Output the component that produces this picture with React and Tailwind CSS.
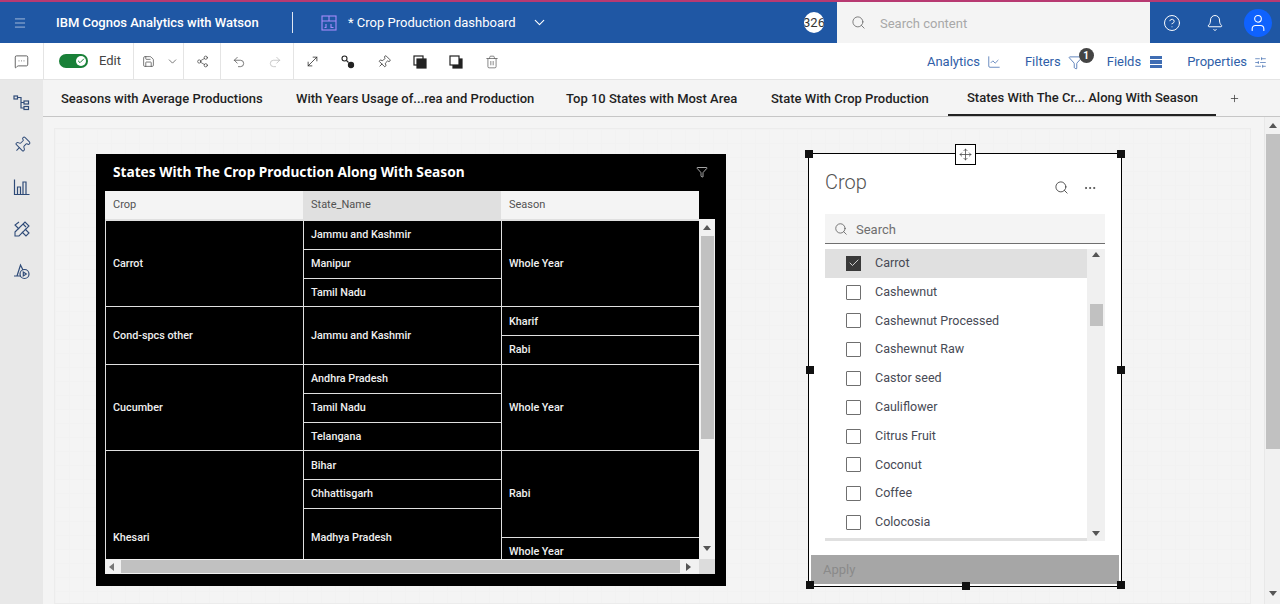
import {
  Menu, Search, CircleHelp, Bell, User, ChevronDown, Share2, Undo2, Redo2, Save, Trash2, Pin,
  Filter, MessageSquareMore, MoveDiagonal, ChartLine, SlidersHorizontal, Plus, Check, Move, Ellipsis,
} from "lucide-react";

const font = { fontFamily: '"Roboto", "Noto Sans", sans-serif' };

const tabs = [
  { label: "Seasons with Average Productions", w: "w-[234px] pl-[18px]" },
  { label: "With Years Usage of...rea and Production", w: "w-[270px] pl-[19px]" },
  { label: "Top 10 States with Most Area", w: "w-[205px] pl-[19px]" },
  { label: "State With Crop Production", w: "w-[196px] pl-[19px]" },
  { label: "States With The Cr... Along With Season", w: "w-[268px] pl-[19px]", active: true },
];

const crops = ["Carrot", "Cashewnut", "Cashewnut Processed", "Cashewnut Raw", "Castor seed", "Cauliflower", "Citrus Fruit", "Coconut", "Coffee", "Colocosia"];

function BoardIcon() {
  return (
    <svg width="18" height="18" viewBox="0 0 18 18" fill="none" stroke="#a78bfa" strokeWidth="1.1">
      <rect x="2" y="2" width="14" height="14" />
      <path d="M2 7h14M9 2v5M6 10v3.5H4.5M11 10v3.5h2.5" />
    </svg>
  );
}

function HierarchyIcon() {
  return (
    <svg width="18" height="18" viewBox="0 0 18 18" fill="none" stroke="#2f4b78" strokeWidth="1.2">
      <rect x="1" y="2" width="3.5" height="3" />
      <rect x="11" y="7" width="4.5" height="3" />
      <rect x="11" y="12.5" width="4.5" height="3" />
      <path d="M4.5 3.5H8V14h3M8 8.5h3" />
    </svg>
  );
}

function BarsIcon() {
  return (
    <svg width="18" height="18" viewBox="0 0 18 18" fill="none" stroke="#2f4b78" strokeWidth="1.2">
      <path d="M1.5 1.5v15h15M4.5 16.5V9h3v7.5M10 16.5V4h3v12.5" />
    </svg>
  );
}

function ToolsIcon() {
  return (
    <svg width="18" height="18" viewBox="0 0 18 18" fill="none" stroke="#2f4b78" strokeWidth="1.1">
      <path d="M2 12 12 2l4 4L6 16H2z" />
      <path d="M6 2 2 5l4 4M12 9l4 4-3 3-4-4" />
      <path d="m10 4 3 3" />
    </svg>
  );
}

function ShapesPlayIcon() {
  return (
    <svg width="18" height="18" viewBox="0 0 18 18" fill="none" stroke="#2f4b78" strokeWidth="1.2">
      <path d="M1 14h7M4 14l3.5-11L10 8" />
      <circle cx="11.5" cy="12" r="4.5" />
      <path d="m10.3 10 3 2-3 2z" />
    </svg>
  );
}

function StackIcon({ front }) {
  // front = the dark square lies on top
  return (
    <svg width="14" height="14" viewBox="0 0 14 14" fill="none" stroke="#222" strokeWidth="1.2">
      {front ? (
        <>
          <rect x="1" y="1" width="9" height="9" fill="#fff" />
          <rect x="4" y="4" width="9" height="9" fill="#222" />
        </>
      ) : (
        <>
          <rect x="4" y="4" width="9" height="9" fill="#222" />
          <rect x="1" y="1" width="9" height="9" fill="#fff" />
        </>
      )}
    </svg>
  );
}

function ConnectIcon() {
  return (
    <svg width="14" height="14" viewBox="0 0 14 14" fill="none" stroke="#222" strokeWidth="1.1">
      <circle cx="3.5" cy="3.5" r="2.5" />
      <path d="m5.5 5.5 2 2" />
      <circle cx="10" cy="10" r="2.6" fill="#222" />
    </svg>
  );
}

function FieldsIcon() {
  return (
    <svg width="14" height="14" viewBox="0 0 14 14" fill="#3f6db3">
      <rect x="1" y="1" width="12" height="3" />
      <rect x="1" y="5" width="12" height="4" />
      <rect x="1" y="10" width="12" height="3" />
    </svg>
  );
}

function Tool({ children }) {
  return <div className="w-[36px] pt-[1px] flex justify-center">{children}</div>;
}

function Sep() {
  return <div className="w-px h-full bg-[#e4e4e4]" />;
}

function Handle({ className }) {
  return <div className={`absolute w-[8px] h-[8px] bg-[#111] ${className}`} />;
}

function Cell({ children, rowSpan }) {
  return (
    <td rowSpan={rowSpan} className="border border-[#e0e0e0] pl-[7px] pr-[6px] pt-[1px] text-[10.8px] font-medium text-[#f0f0f0] align-middle">
      {children}
    </td>
  );
}

function Row({ children }) {
  return <tr className="h-[28.8px]">{children}</tr>;
}

function Arrow({ dir, className = "" }) {
  const shape = {
    up: "border-x-[4px] border-x-transparent border-b-[5px] border-b-[#555]",
    down: "border-x-[4px] border-x-transparent border-t-[5px] border-t-[#555]",
    left: "border-y-[4px] border-y-transparent border-r-[5px] border-r-[#777]",
    right: "border-y-[4px] border-y-transparent border-l-[5px] border-l-[#555]",
  }[dir];
  return <div className={`w-0 h-0 ${shape} ${className}`} />;
}

function DataTable() {
  return (
    <div className="mt-[1px] ml-[9px] w-[610px] h-[383px] flex flex-wrap content-start relative bg-black">
      <div className="w-[594px] h-[29px] grid grid-cols-3 bg-[#f4f4f4] text-[11px] text-[#525252] border-b border-[#e0e0e0]">
        <div className="flex items-center pl-[8px] pt-[1px]">Crop</div>
        <div className="flex items-center pl-[8px] pt-[1px] bg-[#e0e0e0]">State_Name</div>
        <div className="flex items-center pl-[8px] pt-[1px]">Season</div>
      </div>
      <div className="w-[594px] h-[339px] overflow-hidden">
        <table className="w-[594px] table-fixed border-collapse">
          <colgroup>
            <col className="w-[198px]" />
            <col className="w-[198px]" />
            <col className="w-[198px]" />
          </colgroup>
          <tbody>
            <Row><Cell rowSpan={3}>Carrot</Cell><Cell>Jammu and Kashmir</Cell><Cell rowSpan={3}>Whole Year</Cell></Row>
            <Row><Cell>Manipur</Cell></Row>
            <Row><Cell>Tamil Nadu</Cell></Row>
            <Row><Cell rowSpan={2}>Cond-spcs other</Cell><Cell rowSpan={2}>Jammu and Kashmir</Cell><Cell>Kharif</Cell></Row>
            <Row><Cell>Rabi</Cell></Row>
            <Row><Cell rowSpan={3}>Cucumber</Cell><Cell>Andhra Pradesh</Cell><Cell rowSpan={3}>Whole Year</Cell></Row>
            <Row><Cell>Tamil Nadu</Cell></Row>
            <Row><Cell>Telangana</Cell></Row>
            <Row><Cell rowSpan={6}>Khesari</Cell><Cell>Bihar</Cell><Cell rowSpan={3}>Rabi</Cell></Row>
            <Row><Cell>Chhattisgarh</Cell></Row>
            <Row><Cell rowSpan={2}>Madhya Pradesh</Cell></Row>
            <Row><Cell>Whole Year</Cell></Row>
            <Row><Cell></Cell><Cell></Cell></Row>
            <Row><Cell></Cell><Cell></Cell></Row>
          </tbody>
        </table>
      </div>
      {/* vertical scrollbar */}
      <div className="absolute left-[594px] top-[28px] w-[16px] h-[340px] bg-[#f1f1f1] flex flex-col items-center">
        <Arrow dir="up" className="mt-[6px]" />
        <div className="mt-[6px] w-[13px] h-[203px] bg-[#c1c1c1]" />
        <Arrow dir="down" className="mt-auto mb-[8px]" />
      </div>
      {/* horizontal scrollbar */}
      <div className="w-[594px] h-[15px] bg-[#f1f1f1] flex items-center">
        <Arrow dir="left" className="ml-[4px]" />
        <div className="ml-[7px] w-[559px] h-[13px] bg-[#c1c1c1]" />
        <Arrow dir="right" className="ml-[6px]" />
      </div>
      <div className="w-[16px] h-[15px] bg-[#dcdcdc]" />
    </div>
  );
}

function CropFilter() {
  return (
    <div className="relative w-[314px] h-[434px] bg-white border border-black">
      <Handle className="-left-[4px] -top-[4px]" />
      <Handle className="-right-[4px] -top-[4px]" />
      <Handle className="-left-[3px] top-[212px]" />
      <Handle className="-right-[4px] top-[212px]" />
      <Handle className="-left-[3px] -bottom-[3px]" />
      <Handle className="left-[153px] -bottom-[4px]" />
      <Handle className="-right-[4px] -bottom-[3px]" />
      <div className="absolute left-[146px] -top-[10px] w-[21px] h-[21px] bg-white border border-black flex items-center justify-center">
        <Move size={13} strokeWidth={1.4} color="#444" />
      </div>

      <div className="flex items-start h-[60px]">
        <span className="ml-[16px] mt-[16px] text-[20px] leading-[24px] font-light text-[#525252]">Crop</span>
        <Search size={15} strokeWidth={1.3} color="#333" className="ml-auto mt-[26px]" />
        <Ellipsis size={14} strokeWidth={1.6} color="#444" className="ml-[14px] mr-[24px] mt-[27px]" />
      </div>

      <div className="ml-[16px] w-[280px] h-[30px] bg-[#f4f4f4] border-b border-[#6f6f6f] flex items-center">
        <Search size={14} strokeWidth={1.3} color="#525252" className="ml-[9px]" />
        <span className="ml-[8px] pt-[2px] text-[13px] text-[#6f6f6f]">Search</span>
      </div>

      <div className="ml-[16px] mt-[5px] w-[280px] h-[292px] flex">
        <div className="w-[262px] h-[292px] border-b-[3px] border-[#e0e0e0]">
          {crops.map((crop, i) => (
            <div key={crop} className={`h-[28.8px] flex items-center ${i === 0 ? "bg-[#e0e0e0]" : ""}`}>
              {i === 0 ? (
                <div className="ml-[21px] w-[15px] h-[15px] bg-[#393939] flex items-center justify-center">
                  <Check size={12} strokeWidth={1.5} color="#fff" />
                </div>
              ) : (
                <div className="ml-[21px] w-[15px] h-[15px] border border-[#6f6f6f] rounded-[1px]" />
              )}
              <span className="ml-[14px] text-[12.5px] text-[#474a55]">{crop}</span>
            </div>
          ))}
        </div>
        <div className="w-[18px] bg-[#f0f0f0] flex flex-col items-center">
          <Arrow dir="up" className="mt-[3px]" />
          <div className="mt-[47px] w-[13px] h-[22px] bg-[#c1c1c1]" />
          <Arrow dir="down" className="mt-auto mb-[5px]" />
        </div>
      </div>

      <div className="ml-[2px] mt-[14px] w-[308px] h-[29px] bg-[#a6a6a6] flex items-center pl-[12px] text-[13px] text-[#8a8a8a]">
        Apply
      </div>
    </div>
  );
}

export default function App() {
  return (
    <div className="w-[1280px] h-[604px] overflow-hidden flex flex-col bg-[#f4f4f4]" style={font}>
      {/* Top bar */}
      <header className="h-[43px] shrink-0 bg-[#1f57a4] border-t-2 border-[#b83a72] flex items-center text-white relative">
        <div className="w-[40px] flex justify-center">
          <Menu size={14} strokeWidth={1.3} color="#c9d6ea" />
        </div>
        <span className="ml-[16px] w-[236px] text-[13px] font-medium">IBM Cognos Analytics with Watson</span>
        <div className="w-px h-[21px] bg-[#dfe7f3]" />
        <div className="ml-[27px]"><BoardIcon /></div>
        <span className="ml-[10px] w-[183px] text-[13px]">* Crop Production dashboard</span>
        <ChevronDown size={17} strokeWidth={1.6} />
        <div className="ml-[256px] w-[20px] h-[21px] rounded-full bg-white text-[#333] text-[13px] flex items-center justify-center overflow-hidden">326</div>
        <div className="ml-[13px] w-[313px] h-[41px] bg-[#f4f4f4] flex items-center">
          <Search size={15} strokeWidth={1.4} color="#6f6f6f" className="ml-[14px]" />
          <span className="ml-[14px] pt-[2px] text-[13px] text-[#a8a8a8]">Search content</span>
        </div>
        <CircleHelp size={18} strokeWidth={1.3} className="ml-[13px]" />
        <Bell size={18} strokeWidth={1.3} className="ml-[25px]" />
        <div className="ml-[20px] w-[28px] h-[28px] rounded-full bg-[#0f62fe] flex items-center justify-center">
          <User size={20} strokeWidth={1.3} />
        </div>
      </header>

      {/* Toolbar */}
      <div className="h-[37px] shrink-0 bg-white border-b border-[#e4e4e4] flex items-center">
        <div className="w-[43px] flex justify-center"><MessageSquareMore size={15} strokeWidth={1.2} color="#333" /></div>
        <Sep />
        <div className="w-[89px] flex items-center">
          <div className="ml-[15px] w-[29px] h-[14px] rounded-full bg-[#198038] flex items-center justify-end pr-[2px]">
            <div className="w-[10px] h-[10px] rounded-full bg-white flex items-center justify-center">
              <Check size={8} strokeWidth={3} color="#198038" />
            </div>
          </div>
          <span className="ml-[11px] text-[13px] text-[#444]">Edit</span>
        </div>
        <Sep />
        <div className="w-[49px] flex items-center pt-[1px]">
          <Save size={13} strokeWidth={1.3} color="#444" className="ml-[8px]" />
          <ChevronDown size={13} strokeWidth={1.3} color="#444" className="ml-[11px]" />
        </div>
        <Sep />
        <Tool><Share2 size={13} strokeWidth={1.2} color="#333" /></Tool>
        <Sep />
        <Tool><Undo2 size={14} strokeWidth={1.2} color="#444" /></Tool>
        <Tool><Redo2 size={14} strokeWidth={1.2} color="#b5b5b5" /></Tool>
        <Sep />
        <Tool><MoveDiagonal size={15} strokeWidth={1.2} color="#222" /></Tool>
        <Tool><ConnectIcon /></Tool>
        <Tool><Pin size={14} strokeWidth={1.2} color="#222" className="rotate-45" /></Tool>
        <Tool><StackIcon front /></Tool>
        <Tool><StackIcon /></Tool>
        <Tool><Trash2 size={14} strokeWidth={1.2} color="#555" /></Tool>
        <div className="ml-auto pt-[2px] flex items-center text-[13px] text-[#2f5ea8]">
          <span>Analytics</span>
          <ChartLine size={14} strokeWidth={1.2} className="ml-[7px]" />
          <span className="ml-[24px]">Filters</span>
          <div className="relative ml-[7px]">
            <Filter size={15} strokeWidth={1.2} />
            <div className="absolute -top-[7px] left-[11px] w-[15px] h-[15px] rounded-full bg-[#444] text-white text-[10px] font-bold flex items-center justify-center">1</div>
          </div>
          <span className="ml-[24px]">Fields</span>
          <div className="ml-[8px]"><FieldsIcon /></div>
          <span className="ml-[24px]">Properties</span>
          <SlidersHorizontal size={13} strokeWidth={1.2} className="ml-[7px] mr-[13px]" />
        </div>
      </div>

      <div className="flex-1 flex min-h-0">
        {/* Left rail */}
        <aside className="w-[43px] shrink-0 bg-[#e8e8e8] flex flex-col items-center pt-[14px] gap-[24px]">
          <HierarchyIcon />
          <Pin size={18} strokeWidth={1.3} color="#2f4b78" className="rotate-45" />
          <BarsIcon />
          <ToolsIcon />
          <ShapesPlayIcon />
        </aside>

        <div className="flex-1 flex flex-col min-w-0">
          {/* Tabs */}
          <nav className="h-[37px] shrink-0 flex border-b border-[#c6c6c6] text-[13px] font-medium text-[#1f1f1f]">
            {tabs.map((tab) => (
              <div key={tab.label} className={`${tab.w} h-[36px] pt-[2px] flex items-center whitespace-nowrap ${tab.active ? "border-b-2 border-[#222]" : ""}`}>
                {tab.label}
              </div>
            ))}
            <div className="ml-[13px] h-[36px] flex items-center"><Plus size={11} strokeWidth={1.6} color="#333" /></div>
          </nav>

          <div className="flex-1 flex min-h-0">
            {/* Canvas */}
            <main className="flex-1 min-w-0 pl-[11px] pt-[11px] pr-[13px]">
              <div className="h-full border border-[#ececec] bg-[#f4f4f4] bg-[linear-gradient(#f2f2f2_1px,transparent_1px),linear-gradient(90deg,#f2f2f2_1px,transparent_1px)] bg-[size:14px_14px] flex items-start pl-[41px] pt-[25px]">
                <div className="w-[630px] h-[432px] bg-black shrink-0">
                  <div className="h-[36px] flex items-center pl-[17px] pr-[18px] text-white">
                    <span className="text-[13.7px] font-bold" style={{ fontFamily: '"Noto Sans", sans-serif' }}>States With The Crop Production Along With Season</span>
                    <Filter size={12} strokeWidth={1.3} className="ml-auto" />
                  </div>
                  <DataTable />
                </div>
                <div className="ml-[82px] -mt-[1px]"><CropFilter /></div>
              </div>
            </main>
            {/* Page scrollbar */}
            <div className="w-[16px] shrink-0 bg-[#f1f1f1] border-l border-[#e8e8e8] flex flex-col items-center">
              <Arrow dir="up" className="mt-[6px]" />
              <div className="mt-[6px] w-[14px] h-[315px] bg-[#c1c1c1]" />
              <Arrow dir="down" className="mt-auto mb-[8px]" />
            </div>
          </div>
        </div>
      </div>
    </div>
  );
}
